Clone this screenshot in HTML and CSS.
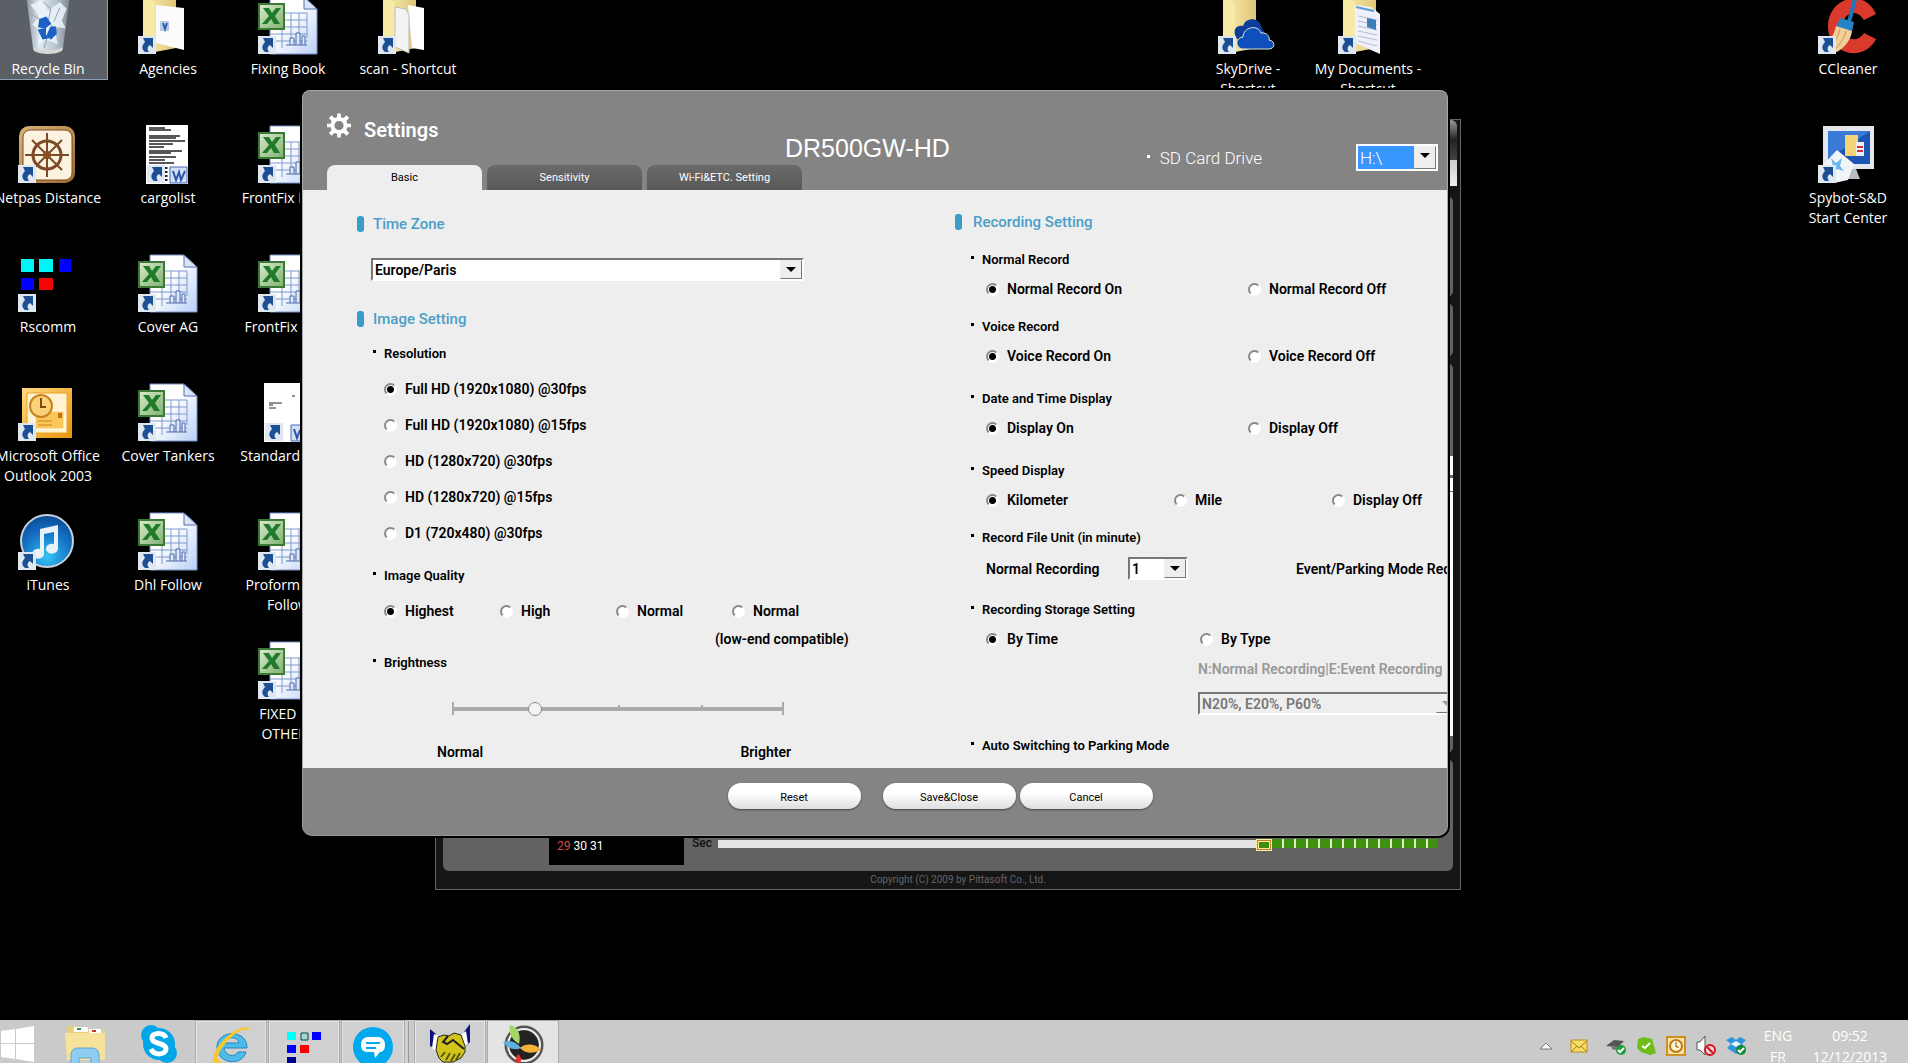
FILE: index.html
```
<!DOCTYPE html>
<html lang="en">
<head>
<meta charset="UTF-8">
<meta name="viewport" content="width=device-width, initial-scale=1.0">
<title>DR500GW-HD Settings</title>
<link rel="stylesheet" href="styles.css">
</head>
<body>

<!-- Shared icon shapes -->
<svg class="defs" aria-hidden="true">
<defs>
<linearGradient id="gPaper" x1="0" y1="0" x2="1" y2="1"><stop offset="0.4" stop-color="#fff"/><stop offset="1" stop-color="#b9cff5"/></linearGradient>
<linearGradient id="gFolder" x1="0" x2="1"><stop offset="0" stop-color="#fbeeb0"/><stop offset="1" stop-color="#dfc677"/></linearGradient>
<linearGradient id="gGreen" x1="0" y1="0" x2="1" y2="1"><stop offset="0" stop-color="#dcebd0"/><stop offset="1" stop-color="#7fb070"/></linearGradient>
<linearGradient id="gWood" x1="0" y1="0" x2="1" y2="1"><stop offset="0" stop-color="#d9b27c"/><stop offset="1" stop-color="#a06a2c"/></linearGradient>
<linearGradient id="gGold" x1="0" y1="0" x2="1" y2="1"><stop offset="0" stop-color="#ffd980"/><stop offset="1" stop-color="#e8930c"/></linearGradient>
<linearGradient id="gBin" x1="0" x2="1"><stop offset="0" stop-color="#8d98a3"/><stop offset="0.3" stop-color="#dfe8f0"/><stop offset="0.7" stop-color="#b4c0cc"/><stop offset="1" stop-color="#7e8791"/></linearGradient>
<radialGradient id="gTunes" cx="0.5" cy="0.8" r="0.8"><stop offset="0" stop-color="#35c3f5"/><stop offset="0.6" stop-color="#1470c4"/><stop offset="1" stop-color="#0b4a94"/></radialGradient>
<symbol id="arrow" viewBox="0 0 18 18"><path d="M0 0H18V18H0z" fill="#dfe7f1"/><path d="M5 2H15V12L12 9C9 11 9 13 11 16H7C3 13 4 9 7 6z" fill="#1d4f95"/></symbol>
<symbol id="excel" viewBox="0 0 60 60">
<path d="M12 1H46L59 13V58H12z" fill="url(#gPaper)" stroke="#7792c8"/>
<path d="M46 1V13H59z" fill="#dbe5f8" stroke="#5573ad"/>
<path d="M27 17H49M22 24H49M22 31H49M12 38H49M12 45H49M33 17V45M41 17V45M49 17V42M24 31V52" stroke="#7d99cf" fill="none"/>
<path d="M32 49V42H36V49M38 49V37H42V49M44 49V40H47V49M28 49H49" stroke="#4c6aa8" fill="#dce8fb"/>
<path d="M1 8H26V33H1z" fill="url(#gGreen)" stroke="#3b7a35" stroke-width="2"/>
<path d="M5 12H11L14 17L18 12H23L17 20L22 28H16L13 23L9 28H4L11 20z" fill="#1f7a2a"/>
</symbol>
<symbol id="folder" viewBox="0 0 60 60"><path d="M5 0H38V52L12 57L5 52z" fill="url(#gFolder)"/><path d="M5 0L17 7V58L5 53z" fill="#f7e9a6"/></symbol>
</defs>
</svg>

<main class="desktop">

<!-- Desktop shortcuts -->
<nav class="shortcuts">
<a class="shortcut selected c1 r1" href="#"><svg viewBox="0 0 60 60"><path d="M8 0H52L45 54C40 58 20 58 15 54z" fill="url(#gBin)"/><path d="M12 8L25 3L30 14L42 5L49 12L44 24L48 32L36 30L40 48L27 43L20 50L22 34L14 28L22 20z" fill="#eef4fa" opacity="0.85"/><path d="M25 5L33 12L30 26L40 34L30 38L26 52M13 17L23 24M42 11L36 25" fill="none" stroke="#8fa4b8"/><path d="M22 23L28 21L32 27L27 31L21 30zM21 34L27 32L27 39L31 41L25 42zM33 31L37 31L38 37L33 42L30 38z" fill="#1c62c4" stroke="#1c62c4" stroke-width="2"/><path d="M15 51C22 55 38 55 45 51L44 55C38 59 22 59 16 55z" fill="#d7d7d7"/></svg>Recycle Bin</a>
<a class="shortcut c2 r1" href="#"><svg viewBox="0 0 60 60"><use href="#folder"/><path d="M18 9L46 12V54L18 47z" fill="#fbfbfb"/><path d="M22 25H31V35H22z" fill="#b9cbe8"/><path d="M25 27L27 33L29 27" fill="none" stroke="#3463ad" stroke-width="2"/><use href="#arrow" x="0" y="40" width="18" height="18"/></svg>Agencies</a>
<a class="shortcut c3 r1" href="#"><svg viewBox="0 0 60 60"><use href="#excel"/><use href="#arrow" x="0" y="40" width="18" height="18"/></svg>Fixing Book</a>
<a class="shortcut c4 r1" href="#"><svg viewBox="0 0 60 60"><use href="#folder"/><path d="M30 9L46 12V54L34 52z" fill="#fff"/><path d="M17 11L28 13L31 19V57L17 51z" fill="#f3f3f3" stroke="#bbb"/><use href="#arrow" x="0" y="40" width="18" height="18"/></svg>scan - Shortcut</a>
<a class="shortcut c11 r1" href="#"><svg viewBox="0 0 60 60"><use href="#folder"/><path d="M20 44C14 38 16 28 25 30C28 20 42 22 43 30L48 40z" fill="#0c3f99"/><path d="M24 53C17 51 17 42 25 41C25 31 40 28 43 37C50 36 52 42 51 44C58 45 57 53 51 53z" fill="#0f4fbc" stroke="#dfe9cf"/><use href="#arrow" x="0" y="40" width="18" height="18"/></svg>SkyDrive -<br>Shortcut</a>
<a class="shortcut c12 r1" href="#"><svg viewBox="0 0 60 60"><use href="#folder"/><path d="M17 9L33 11L42 18V58L17 47z" fill="#eef1fa"/><path d="M18 11L36 15" stroke="#5a9bd4" stroke-width="2"/><path d="M20 20L39 24M20 25L39 29M20 30L39 34M20 35L39 39M20 40L39 44M20 45L39 50" stroke="#b7bed2"/><path d="M29 22L38 24V34L29 31z" fill="#3a7fb8"/><use href="#arrow" x="0" y="40" width="18" height="18"/></svg>My Documents -<br>Shortcut</a>
<a class="shortcut c16 r1" href="#"><svg viewBox="0 0 60 60"><path d="M58 18C46 -9 10 2 10 30C10 59 46 67 58 43L46 37C39 48 25 44 25 30C25 16 39 12 46 24z" fill="#d93a2b"/><path d="M37 3L31 26" stroke="#1b78bd" stroke-width="4"/><path d="M22 22L36 26L34 36L18 31z" fill="#2383c4"/><path d="M18 30L34 35C33 44 27 51 19 56L2 52C12 46 16 39 18 30z" fill="#f0cf98"/><path d="M22 33C20 42 15 48 10 53M28 35C26 44 20 50 16 55" stroke="#c9984f" fill="none"/><use href="#arrow" x="0" y="40" width="18" height="18"/></svg>CCleaner</a>

<a class="shortcut c1 r2" href="#"><svg viewBox="0 0 60 60"><rect x="1" y="1" width="56" height="57" rx="10" fill="url(#gWood)"/><rect x="5" y="5" width="49" height="50" rx="7" fill="#fbf3e0" stroke="#7a4f20"/><circle cx="29" cy="30" r="14" fill="none" stroke="#7c4a26" stroke-width="3"/><path d="M29 8V52M7 30H51M14 15L44 45M44 15L14 45" stroke="#7c4a26" stroke-width="2"/><circle cx="29" cy="30" r="4" fill="#8a4c22"/><use href="#arrow" x="0" y="40" width="18" height="18"/></svg>Netpas Distance</a>
<a class="shortcut c2 r2" href="#"><svg viewBox="0 0 60 60"><path d="M8 0H50V59H8z" fill="#fff"/><path d="M11 3H27M11 5H33M11 11H42M11 13H38M11 16H47M11 19H35M11 22H26M11 26H44M11 28H33M11 32H38M11 35H27M11 38H36" stroke="#222" stroke-width="1.5"/><path d="M27 42V58" stroke="#222" stroke-width="5" stroke-dasharray="2 2"/><path d="M32 42H49V58H32z" fill="#d4def5" stroke="#4668b3"/><path d="M35 46L38 55L41 47L43 55L47 46" fill="none" stroke="#2b54a8" stroke-width="2"/><use href="#arrow" x="9" y="40" width="18" height="18"/></svg>cargolist</a>
<a class="shortcut c3 r2" href="#"><svg viewBox="0 0 60 60"><use href="#excel"/><use href="#arrow" x="0" y="40" width="18" height="18"/></svg>FrontFix Deals</a>
<a class="shortcut c16 r2" href="#"><svg viewBox="0 0 60 60"><path d="M5 1H56V44H5z" fill="#e4e7ec"/><path d="M10 6H52V39H10z" fill="#1d55b5"/><path d="M10 6H52L10 34z" fill="#3b7bd8"/><path d="M27 10H40V31H27z" fill="#f3d374"/><path d="M38 17H46V31H38z" fill="#eee"/><path d="M39 22H45M39 26H45" stroke="#c33" stroke-width="2"/><path d="M31 44H38L42 54H27z" fill="#b9bcc0"/><path d="M19 25L36 39L30 55L16 58L3 42z" fill="#f2f5f8"/><path d="M13 33L18 38L24 33L22 41L26 46L19 44L14 49L15 41z" fill="#6bb6ea"/><use href="#arrow" x="0" y="40" width="18" height="18"/></svg>Spybot-S&amp;D<br>Start Center</a>

<a class="shortcut c1 r3" href="#"><svg viewBox="0 0 60 60"><path d="M3 5H16V18H3zM21 5H35V18H21z" fill="#00f6f6"/><path d="M41 5H53V18H41zM3 24H16V36H3z" fill="#00f"/><path d="M21 24H35V36H21z" fill="#f50505"/><use href="#arrow" x="0" y="40" width="18" height="18"/></svg>Rscomm</a>
<a class="shortcut c2 r3" href="#"><svg viewBox="0 0 60 60"><use href="#excel"/><use href="#arrow" x="0" y="40" width="18" height="18"/></svg>Cover AG</a>
<a class="shortcut c3 r3" href="#"><svg viewBox="0 0 60 60"><use href="#excel"/><use href="#arrow" x="0" y="40" width="18" height="18"/></svg>FrontFix Voys</a>

<a class="shortcut c1 r4" href="#"><svg viewBox="0 0 60 60"><path d="M4 5H54V55H4z" fill="url(#gGold)"/><path d="M9 10H49V50H9z" fill="#fff3cf" stroke="#e9a22a"/><path d="M17 28H46V46H17z" fill="#fbc75a" stroke="#fff"/><path d="M40 30H44V35H40z" fill="#c96f14"/><path d="M20 38H34M20 42H34" stroke="#d18420"/><circle cx="23" cy="23" r="11" fill="#fbd27a" stroke="#c8821f" stroke-width="2"/><path d="M23 15V24H28" fill="none" stroke="#7c4d12" stroke-width="2"/><use href="#arrow" x="0" y="40" width="18" height="18"/></svg>Microsoft Office<br>Outlook 2003</a>
<a class="shortcut c2 r4" href="#"><svg viewBox="0 0 60 60"><use href="#excel"/><use href="#arrow" x="0" y="40" width="18" height="18"/></svg>Cover Tankers</a>
<a class="shortcut c3 r4" href="#"><svg viewBox="0 0 60 60"><path d="M6 0H50V59H6z" fill="#fff"/><path d="M11 20H24M11 22H15M34 13H37M11 25H18" stroke="#222"/><path d="M33 42H50V58H33z" fill="#d4def5" stroke="#4668b3"/><path d="M36 46L39 55L42 47" fill="none" stroke="#2b54a8" stroke-width="2"/><use href="#arrow" x="7" y="40" width="18" height="18"/></svg>Standard Docs</a>

<a class="shortcut c1 r5" href="#"><svg viewBox="0 0 60 60"><circle cx="29" cy="29" r="26" fill="url(#gTunes)" stroke="#c9d2da" stroke-width="2"/><path d="M22 17L40 13V37A6 5 0 1 1 36 32V20L26 22V41A6 5 0 1 1 22 37z" fill="#e9f2f8"/><use href="#arrow" x="0" y="40" width="18" height="18"/></svg>iTunes</a>
<a class="shortcut c2 r5" href="#"><svg viewBox="0 0 60 60"><use href="#excel"/><use href="#arrow" x="0" y="40" width="18" height="18"/></svg>Dhl Follow</a>
<a class="shortcut c3 r5" href="#"><svg viewBox="0 0 60 60"><use href="#excel"/><use href="#arrow" x="0" y="40" width="18" height="18"/></svg>Proforma AG<br>Follow</a>
<a class="shortcut c3 r6" href="#"><svg viewBox="0 0 60 60"><use href="#excel"/><use href="#arrow" x="0" y="40" width="18" height="18"/></svg>FIXED BY<br>OTHERS</a>
</nav>

<!-- Viewer window behind the settings -->
<section class="viewer">
<div class="viewer-head"></div>
<div class="viewer-light"></div>
<div class="viewer-panel tall"></div>
<div class="viewer-panel"></div>
<div class="viewer-panel list"><div class="list-head"></div><div class="list-tab"></div><div class="list-body"></div></div>
<div class="viewer-panel timeline">
<div class="calendar"><span class="holiday">29</span> 30 31</div>
<span class="sec">Sec</span>
<div class="track"></div>
<div class="marker"></div>
<div class="clips"></div>
</div>
<p class="copyright">Copyright (C) 2009 by Pittasoft Co., Ltd.</p>
</section>

<!-- Settings window -->
<form class="settings">
<header class="settings-head">
<h1><svg class="gear" viewBox="0 0 26 26"><path d="M11 0H15V4L18 5L21 2L24 5L21 8L22 11H26V15H22L21 18L24 21L21 24L18 21L15 22V26H11V22L8 21L5 24L2 21L5 18L4 15H0V11H4L5 8L2 5L5 2L8 5L11 4zM13 8A5 5 0 1 0 13 18A5 5 0 1 0 13 8z" fill="#fff" fill-rule="evenodd"/></svg>Settings</h1>
<p class="model">DR500GW-HD</p>
<div class="drive"><label for="drive">SD Card Drive</label>
<span class="combo combo-drive"><select id="drive"><option>H:\</option></select></span></div>
<div class="tabs">
<button type="button" class="active">Basic</button>
<button type="button">Sensitivity</button>
<button type="button">Wi-Fi&amp;ETC. Setting</button>
</div>
</header>

<div class="settings-body">
<section class="column left">
<h2><label for="zone">Time Zone</label></h2>
<span class="combo combo-zone"><select id="zone"><option>Europe/Paris</option></select></span>

<h2>Image Setting</h2>
<h3>Resolution</h3>
<div class="stack">
<label><input type="radio" name="res" checked>Full HD (1920x1080) @30fps</label>
<label><input type="radio" name="res">Full HD (1920x1080) @15fps</label>
<label><input type="radio" name="res">HD (1280x720) @30fps</label>
<label><input type="radio" name="res">HD (1280x720) @15fps</label>
<label><input type="radio" name="res">D1 (720x480) @30fps</label>
</div>

<h3>Image Quality</h3>
<div class="quality">
<label><input type="radio" name="quality" checked>Highest</label>
<label><input type="radio" name="quality">High</label>
<label><input type="radio" name="quality">Normal</label>
<label><input type="radio" name="quality">Normal</label>
</div>
<p class="compatible">(low-end compatible)</p>

<h3><label for="brightness">Brightness</label></h3>
<div class="slider">
<input type="range" id="brightness" min="0" max="4" value="1">
</div>
<div class="slider-text"><span>Normal</span><span>Brighter</span></div>
</section>

<section class="column right">
<h2>Recording Setting</h2>
<div class="group short">
<h3>Normal Record</h3>
<div class="row two">
<label><input type="radio" name="normal" checked>Normal Record On</label>
<label><input type="radio" name="normal">Normal Record Off</label>
</div>
</div>
<div class="group">
<h3>Voice Record</h3>
<div class="row two">
<label><input type="radio" name="voice" checked>Voice Record On</label>
<label><input type="radio" name="voice">Voice Record Off</label>
</div>
</div>
<div class="group">
<h3>Date and Time Display</h3>
<div class="row two">
<label><input type="radio" name="date" checked>Display On</label>
<label><input type="radio" name="date">Display Off</label>
</div>
</div>
<div class="group short">
<h3>Speed Display</h3>
<div class="row three">
<label><input type="radio" name="speed" checked>Kilometer</label>
<label><input type="radio" name="speed">Mile</label>
<label><input type="radio" name="speed">Display Off</label>
</div>
</div>
<div class="group">
<h3>Record File Unit (in minute)</h3>
<div class="row unit">
<label for="unit">Normal Recording</label>
<span class="combo combo-unit"><select id="unit"><option>1</option></select></span>
<span>Event/Parking Mode Recording</span>
</div>
</div>
<div class="group storage">
<h3>Recording Storage Setting</h3>
<div class="row by">
<label><input type="radio" name="storage" checked>By Time</label>
<label><input type="radio" name="storage">By Type</label>
</div>
<div class="ratio">
<label for="ratio">N:Normal Recording|E:Event Recording</label>
<span class="combo combo-ratio"><select id="ratio" disabled><option>N20%, E20%, P60%</option></select></span>
</div>
</div>
<h3>Auto Switching to Parking Mode</h3>
</section>
</div>

<footer class="settings-foot">
<button type="reset" class="reset">Reset</button>
<button type="button">Save&amp;Close</button>
<button type="button">Cancel</button>
</footer>
</form>
</main>

<!-- Taskbar -->
<footer class="taskbar">
<button class="start" aria-label="Start"><svg viewBox="0 0 34 36"><path d="M1 5L15 3V17H1zM16 3L34 0V17H16zM1 18H15V33L1 31zM16 18H34V36L16 33z" fill="#fff"/></svg></button>
<button class="task" aria-label="Explorer"><svg viewBox="0 0 42 42"><path d="M3 3H12L14 6H40V36H3z" fill="#e9cf76"/><path d="M1 10H41V37H3z" fill="#f6e29a"/><path d="M10 4H24V9H10zM25 6H37V10H25z" fill="#fff"/><path d="M13 5H17V7H13z" fill="#3a9a3a"/><path d="M28 7H32V9H28z" fill="#c33"/><path d="M7 42V31Q8 25 14 25H28Q34 25 35 31V42H27V35H15V42z" fill="#8fcdf0" stroke="#5ba8d6"/></svg></button>
<button class="task" aria-label="Skype"><svg viewBox="0 0 42 42"><circle cx="21" cy="21" r="16" fill="#00a6e8"/><circle cx="13" cy="12" r="10" fill="#00a6e8"/><circle cx="29" cy="30" r="10" fill="#00a6e8"/><path d="M28 15C26 9 14 9 14 15C14 22 28 19 28 26C28 32 16 33 13 26" fill="none" stroke="#fff" stroke-width="5"/></svg></button>
<button class="task open" aria-label="Internet Explorer"><svg viewBox="0 0 42 42"><path d="M37 24H14C15 32 25 34 28 28H36C32 43 7 40 7 23C7 6 37 4 37 24zM14 19H29C28 12 16 12 14 19z" fill="#4fbbea" stroke="#2186bf"/><path d="M39 7C41 1 30 2 19 11C7 21 0 34 4 39C6 41 10 39 12 37C6 38 6 31 15 20C24 9 36 2 39 7z" fill="#f9c828"/></svg></button>
<button class="task open" aria-label="Rscomm"><svg viewBox="0 0 42 42"><path d="M4 8H13V16H4z" fill="#0ff"/><path d="M18 9H25V16H18z" fill="#a9d4d4" stroke="#044"/><path d="M29 8H38V16H29zM4 21H13V29H4z" fill="#00f"/><path d="M17 21H26V29H17z" fill="#f00"/><path d="M4 33H13V41H4z" fill="#000090"/></svg></button>
<button class="task open stacked" aria-label="Messenger"><svg viewBox="0 0 42 42"><circle cx="21" cy="23" r="20" fill="#00a9ee"/><path d="M15 13H27Q33 14 33 21Q33 28 28 28L23 34L22 28H15Q9 28 9 21Q9 14 15 13z" fill="#fff"/><path d="M14 19H28M14 24H24" stroke="#00a9ee" stroke-width="2"/></svg></button>
<button class="task open" aria-label="Handshake"><svg viewBox="0 0 42 42"><path d="M1 5L7 10L5 24L1 22zM41 0L35 8L37 22L41 18z" fill="#10107a"/><path d="M5 10L10 12L8 28L3 24zM37 7L32 11L35 23L39 20z" fill="#fff"/><path d="M9 13L15 11L20 12L25 9L32 11L36 22L36 28L32 34L24 38L14 38L10 34L7 26z" fill="#d3c41a" stroke="#222"/><path d="M19 12L14 18L18 20L24 16L35 25" stroke="#222" fill="none" stroke-width="2"/><path d="M12 33L16 28M17 36L21 29M22 37L26 30M27 36L31 29" stroke="#5c560c" fill="none" stroke-width="2"/></svg></button>
<button class="task open current" aria-label="BlackVue"><svg viewBox="0 0 42 42"><circle cx="22" cy="21" r="17" fill="#222" stroke="#555" stroke-width="5"/><circle cx="22" cy="21" r="16" fill="none" stroke="#eee" stroke-width="2"/><path d="M8 1C17 3 19 12 17 20C10 16 6 9 8 1z" fill="#a4d765"/><path d="M1 18C9 15 15 19 19 24C12 27 5 24 1 18z" fill="#5fb0e0"/><path d="M18 24C24 18 35 20 39 26C31 30 24 30 18 24z" fill="#f3b13a"/><path d="M16 30C20 33 20 38 16 42C13 38 13 34 16 30z" fill="#e03530"/></svg></button>
<div class="tray">
<svg viewBox="0 0 20 20"><path d="M4 13L10 7L16 13z" fill="#fff" stroke="#777"/></svg>
<svg class="wide" viewBox="0 0 20 20"><path d="M2 4H18V16H2z" fill="#f8dc68" stroke="#b98e1d"/><path d="M2 5L10 12L18 5M2 16L8 10M18 16L12 10" fill="none" stroke="#a87b14"/></svg>
<svg viewBox="0 0 20 20"><path d="M0 10L8 4L18 5L12 11z" fill="#555"/><path d="M5 10L12 11V15L6 13z" fill="#777"/><circle cx="15" cy="14" r="5" fill="#1f9a3d"/><path d="M12 14L14 16L18 12" stroke="#fff" fill="none" stroke-width="2"/></svg>
<svg viewBox="0 0 20 20"><path d="M2 3L8 1L16 3L18 10L20 17L14 19L5 16L1 12z" fill="#6fbd1c"/><path d="M6 10L9 12L14 7" stroke="#fff" fill="none" stroke-width="2"/></svg>
<svg viewBox="0 0 20 20"><path d="M1 1H19V19H1z" fill="#fbe3a2" stroke="#cf8f25" stroke-width="2"/><circle cx="10" cy="10" r="6" fill="#fff3d0" stroke="#b97b1d" stroke-width="2"/><path d="M10 6V11H13" stroke="#86570f" fill="none"/></svg>
<svg viewBox="0 0 20 20"><path d="M1 6H4L9 0V19L4 14H1z" fill="#fff" stroke="#555"/><circle cx="14" cy="14" r="5" fill="#f3d0d0" stroke="#d3151f" stroke-width="2"/><path d="M11 11L17 17" stroke="#d3151f" stroke-width="2"/></svg>
<svg viewBox="0 0 20 20"><path d="M0 4L6 1L10 4L14 1L20 4L16 8L20 12L10 18L1 12L5 8z" fill="#2f96dd"/><path d="M10 5L15 8L10 11L5 8z" fill="#e7f4fc"/><circle cx="15" cy="14" r="5" fill="#128a3a"/><path d="M12 14L14 16L18 12" stroke="#fff" fill="none" stroke-width="2"/></svg>
<div class="language">ENG<br>FR</div>
<div class="clock">09:52<br>12/12/2013</div>
</div>
</footer>

</body>
</html>
```
FILE: styles.css
```
* {
box-sizing: border-box;
}

body {
margin: 0;
height: 100vh;
display: grid;
grid-template-rows: 1fr 43px;
overflow: hidden;
background-color: #000;
font-family: Roboto, "Liberation Sans", sans-serif;
font-size: 14px;
line-height: 20px;
}

h1, h2, h3, p {
margin: 0;
}

button, select, input {
font: inherit;
margin: 0;
padding: 0;
}

.defs {
position: absolute;
width: 0;
height: 0;
}

.desktop {
position: relative;
min-height: 0;
overflow: hidden;
}

/* Shortcuts */
.shortcuts {
display: grid;
grid-template-columns: repeat(16, 120px);
grid-auto-rows: 129px;
margin: -4px 0 0 -12px;
}

.shortcut {
display: flex;
flex-direction: column;
align-items: center;
color: #fff;
font: 14px/20px "Open Sans", "Noto Sans", sans-serif;
text-align: center;
text-decoration: none;
white-space: nowrap;
}

.shortcut svg {
width: 60px;
height: 60px;
margin-bottom: 3px;
}

.selected {
align-self: start;
height: 84px;
background-color: #5b6066;
border: 1px solid #8aa0b4;
}

.selected svg {
height: 59px;
}

.c1 { grid-column: 1; }
.c2 { grid-column: 2; }
.c3 { grid-column: 3; }
.c4 { grid-column: 4; }
.c11 { grid-column: 11; }
.c12 { grid-column: 12; }
.c16 { grid-column: 16; }
.r1 { grid-row: 1; }
.r2 { grid-row: 2; }
.r3 { grid-row: 3; }
.r4 { grid-row: 4; }
.r5 { grid-row: 5; }
.r6 { grid-row: 6; }

/* Viewer window */
.viewer {
position: absolute;
top: 119px;
left: 435px;
right: 447px;
padding-right: 7px;
padding-left: 7px;
border: 1px solid #666;
background-color: #151515;
}

.viewer-head {
height: 40px;
margin-right: -4px;
border-radius: 0 6px 0 0;
background: linear-gradient(#999, #222 50%, #444);
}

.viewer-light {
height: 26px;
margin: 0 -4px 10px 0;
background: linear-gradient(#ccc, #eee);
}

.viewer-panel {
height: 54px;
margin-bottom: 6px;
border-radius: 6px;
background-color: #626262;
}

.viewer-panel.tall {
height: 101px;
}

.viewer-panel.list {
height: 390px;
padding-top: 93px;
}

.list-head {
height: 19px;
background-color: #fff;
}

.list-tab {
height: 13px;
margin: 3px 0 1px;
background-color: #fff;
}

.list-body {
height: 244px;
background-color: #fff;
}

.viewer-panel.timeline {
display: flex;
align-items: flex-end;
height: 112px;
margin: 0;
padding: 0 15px 6px 106px;
}

.calendar {
width: 135px;
height: 30px;
padding: 1px 0 0 8px;
background-color: #000;
color: #fff;
font-size: 12px;
}

.holiday {
color: #d8483c;
}

.sec {
padding: 0 6px 12px 8px;
color: #111;
font-size: 12px;
font-weight: 500;
}

.track {
flex: 1;
height: 8px;
margin-bottom: 17px;
background-color: #e4e4e4;
}

.marker {
width: 16px;
height: 12px;
margin-bottom: 14px;
border: 3px double #fff0a0;
outline: 1px solid #c87c20;
outline-offset: -2px;
background-color: #3f8f10;
}

.clips {
width: 166px;
height: 9px;
margin-bottom: 17px;
background: repeating-linear-gradient(90deg, #3f8f10 0 10px, #d8f0c0 10px 12px);
}

.copyright {
height: 18px;
padding-left: 20px;
color: #666;
font-size: 10px;
line-height: 18px;
text-align: center;
}

/* Settings window */
.settings {
position: absolute;
top: 88px;
left: 300px;
right: 458px;
border: 2px solid #000;
border-radius: 0 0 12px 12px;
background-color: #000;
}

.settings-head {
display: grid;
grid-template-columns: 458px 1fr auto;
grid-template-rows: 74px 25px;
padding: 0 9px 0 24px;
border: solid #a8a8a8;
border-width: 1px 1px 0;
border-radius: 8px 8px 0 0;
background-color: #848484;
color: #fff;
}

h1 {
display: flex;
align-items: center;
gap: 13px;
padding-top: 4px;
font-size: 20px;
font-weight: 600;
}

.gear {
width: 24px;
height: 25px;
margin-bottom: 10px;
}

.model {
padding-top: 47px;
font-family: "Liberation Sans", sans-serif;
font-size: 25px;
}

.drive {
display: flex;
grid-row: 1 / 3;
grid-column: 3;
align-items: center;
gap: 94px;
padding-top: 34px;
font-size: 17px;
font-weight: 300;
}

.drive label::before {
content: "";
display: inline-block;
width: 3px;
height: 3px;
margin-right: 10px;
vertical-align: 6px;
background-color: #fff;
}

.tabs {
display: flex;
grid-row: 2;
grid-column: 1 / 3;
gap: 5px;
}

.tabs button {
width: 155px;
border: none;
border-radius: 8px 8px 0 0;
background: linear-gradient(#6a6a6a, #585858);
color: #fff;
font-size: 11px;
}

.tabs button.active {
background: #eee;
color: #000;
}

.settings-body {
display: flex;
height: 578px;
overflow: hidden;
border: solid #aaa;
border-width: 0 1px;
background-color: #eee;
color: #000;
font-weight: 600;
white-space: nowrap;
}

.column {
display: flex;
flex-direction: column;
}

.left {
flex: 0 0 598px;
padding: 24px 0 0 54px;
}

.right {
flex: 1;
min-width: 0;
padding: 22px 0 0 54px;
}

h2 {
display: flex;
align-items: center;
gap: 9px;
color: #4a9fc8;
font-size: 15px;
font-weight: 500;
}

h2::before {
content: "";
width: 7px;
height: 16px;
border-radius: 3px;
background-color: #3a9ccb;
}

h3 {
display: flex;
align-items: center;
gap: 8px;
padding-left: 16px;
font-size: 13px;
font-weight: 600;
}

h3::before {
content: "";
width: 3px;
height: 3px;
margin-bottom: 6px;
background-color: #000;
}

.settings-body label {
display: flex;
align-items: center;
}

input[type="radio"] {
appearance: none;
width: 13px;
height: 13px;
margin-right: 8px;
border: 2px solid;
border-color: #888 #fff #fff #888;
border-radius: 50%;
background-color: #fff;
}

input[type="radio"]:checked {
background-image: radial-gradient(circle, #000 3px, transparent 4px);
}

/* Drop-downs */
.combo {
display: inline-flex;
position: relative;
height: 23px;
border: 2px solid;
border-color: #777 #fff #fff #777;
background-color: #fff;
}

.combo select {
appearance: none;
flex: 1;
min-width: 0;
padding-left: 2px;
border: none;
outline: none;
background: transparent;
color: #000;
}

.combo::before {
content: "";
position: absolute;
top: 0;
right: 0;
bottom: 0;
width: 20px;
border: 1px solid;
border-color: #eee #777 #777 #eee;
background-color: #eee;
pointer-events: none;
}

.combo::after {
content: "";
position: absolute;
top: 7px;
right: 6px;
border: 5px solid transparent;
border-top-color: #000;
border-bottom: none;
pointer-events: none;
}

.combo-drive {
width: 82px;
height: 27px;
border-color: #fff;
}

.combo-drive select {
margin-right: 21px;
background-color: #3797ff;
color: #fff;
font-weight: 300;
}

.combo-zone {
width: 433px;
margin: 24px 0 28px 14px;
}

.combo-unit {
width: 60px;
}

.combo-ratio {
width: 262px;
background-color: #eee;
}

.combo-ratio::after {
border-top-color: #999;
}

.combo-ratio select {
color: #777;
opacity: 1;
}

/* Left column */
.left h3 {
margin: 15px 0;
}

.stack {
display: grid;
gap: 16px;
margin-bottom: 8px;
padding-left: 27px;
}

.quality {
display: grid;
grid-template-columns: repeat(4, 116px);
padding-left: 27px;
}

.compatible {
margin: 8px 0 -11px;
padding-left: 358px;
}

.slider {
width: 346px;
height: 24px;
margin: 9px 0 21px 88px;
background:
linear-gradient(#aaa, #aaa) 7px 5px / 2px 13px no-repeat,
linear-gradient(#aaa, #aaa) right 7px top 5px / 2px 13px no-repeat,
linear-gradient(#aaa, #aaa) 173px 8px / 2px 4px no-repeat,
linear-gradient(#aaa, #aaa) 256px 8px / 2px 4px no-repeat,
linear-gradient(#aaa, #aaa) 7px 10px / 332px 4px no-repeat;
}

.slider input {
display: block;
appearance: none;
width: 100%;
height: 24px;
background: transparent;
}

.slider input::-webkit-slider-thumb {
appearance: none;
width: 14px;
height: 14px;
border: 1px solid #888;
border-radius: 50%;
background-color: #f4f4f4;
}

.slider-text {
display: flex;
justify-content: space-between;
width: 354px;
margin-left: 80px;
}

/* Right column */
.right h2 {
gap: 11px;
margin-bottom: 18px;
}

.group {
min-height: 72px;
}

.group.short {
min-height: 67px;
}

.group.storage {
min-height: 136px;
}

.row {
display: grid;
align-items: center;
height: 20px;
margin-top: 9px;
padding-left: 31px;
}

.two {
grid-template-columns: 262px 1fr;
}

.three {
grid-template-columns: 188px 158px 1fr;
}

.unit {
grid-template-columns: 142px 168px 1fr;
}

.by {
grid-template-columns: 214px 1fr;
}

.ratio {
display: grid;
gap: 13px;
margin: 10px 0 0 243px;
color: #999;
}

/* Bottom buttons */
.settings-foot {
display: flex;
justify-content: center;
gap: 4px;
height: 68px;
padding: 15px 0 0 130px;
border: 1px solid #999;
border-top: none;
border-radius: 0 0 10px 10px;
background-color: #848484;
}

.settings-foot button {
width: 133px;
height: 26px;
padding-top: 3px;
border: none;
border-radius: 13px;
background: linear-gradient(#fff 40%, #ddd);
box-shadow: 0 1px 2px #444;
font-size: 11px;
}

.settings-foot .reset {
margin-right: 18px;
}

/* Taskbar */
.taskbar {
display: flex;
position: relative;
overflow: hidden;
background-color: #cacaca;
}

.taskbar button {
flex: none;
height: 50px;
border: none;
background: none;
}

.start {
width: 48px;
}

.start svg {
display: block;
width: 34px;
height: 36px;
margin-bottom: 2px;
}

.task {
width: 74px;
}

.task svg {
display: block;
width: 42px;
height: 42px;
margin: 0 auto 2px;
}

.taskbar .open {
width: 70px;
margin: 1px 3px 0 0;
border: 1px solid #e6e6e6;
outline: 1px solid #aaa;
background-color: #d0d0d0;
}

.taskbar .stacked {
width: 62px;
margin-right: 11px;
box-shadow: 4px 0 0 #d0d0d0, 5px 0 0 #999;
}

.taskbar .current {
background-color: #e4e4e4;
}

.tray {
display: flex;
align-items: flex-start;
gap: 10px;
margin-left: auto;
padding: 5px 18px 0 0;
color: #fff;
font: 14px/21px "Open Sans", "Noto Sans", sans-serif;
text-align: center;
}

.tray svg {
width: 20px;
height: 20px;
margin-top: 11px;
}

.tray .wide {
margin-right: 7px;
margin-left: 3px;
}

.language {
width: 44px;
}

.clock {
width: 80px;
}
```
